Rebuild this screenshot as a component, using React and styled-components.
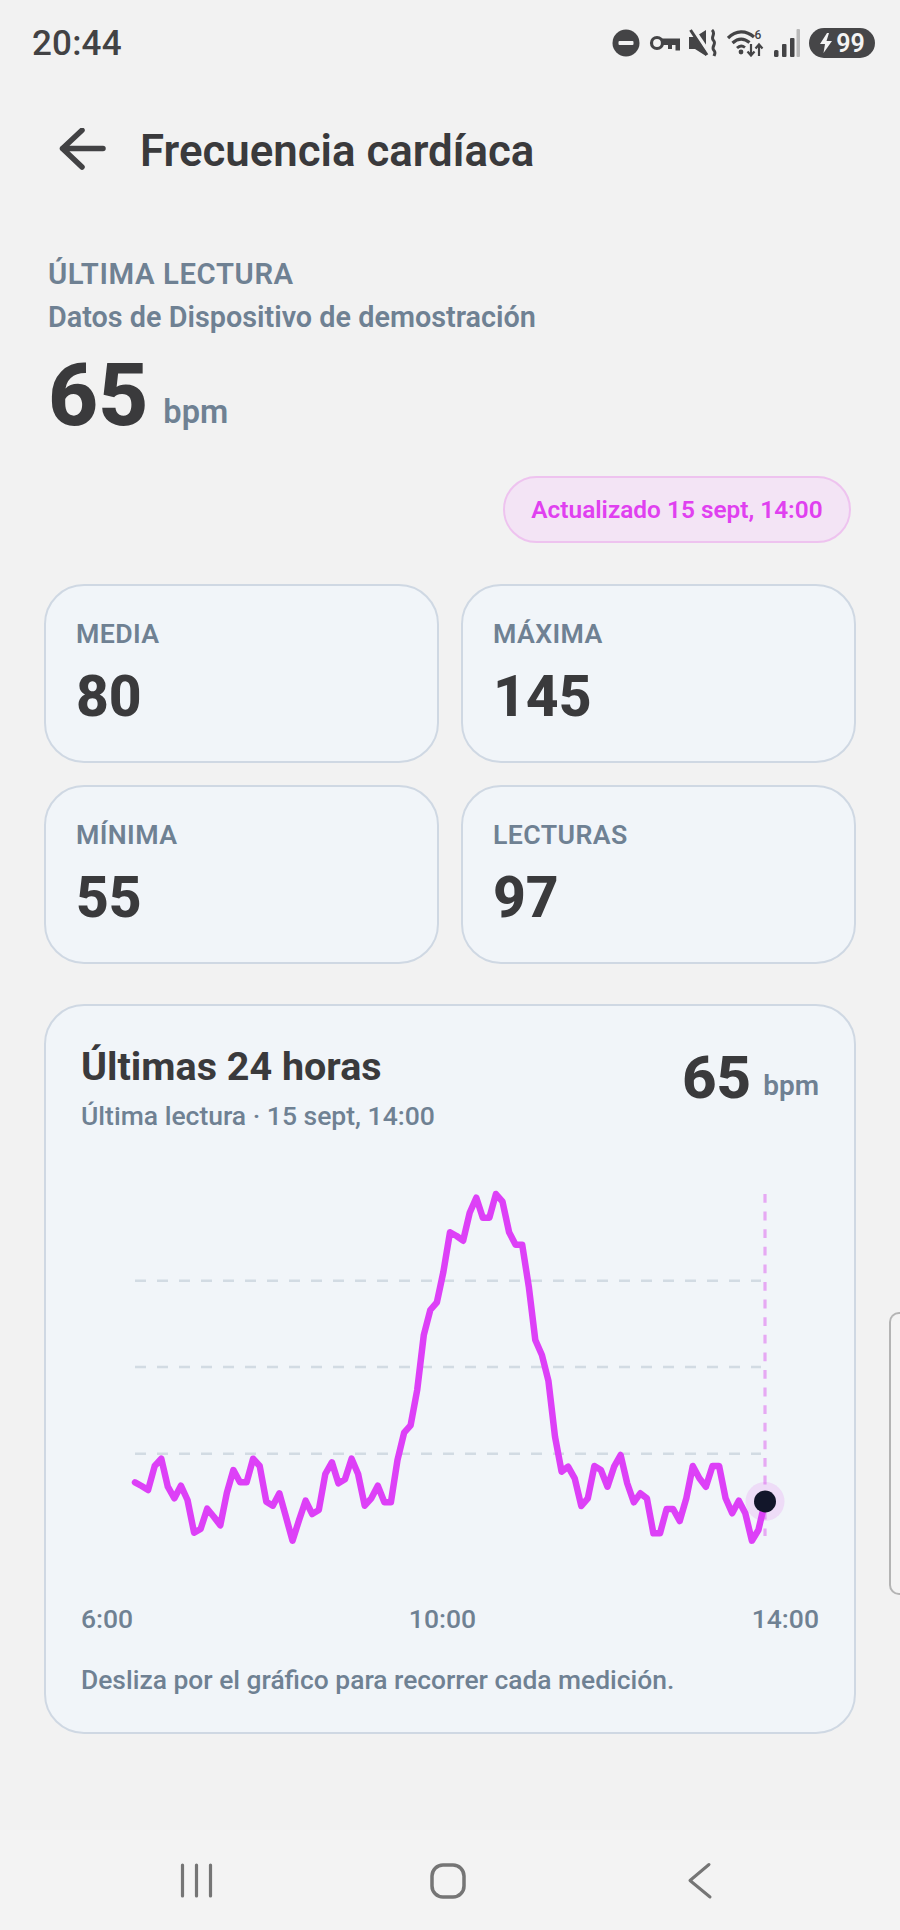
import React from 'react';
import styled, { createGlobalStyle } from 'styled-components';

const GlobalStyle = createGlobalStyle`
    html, body {
        margin: 0;
        padding: 0;
        background-color: #f2f2f2;
        font-family: Roboto, "Liberation Sans", sans-serif;
    }
`;

const Screen = styled.div`
    position: relative;
    width: 900px;
    height: 1930px;
    overflow: hidden;
    background-color: #f2f2f2;
    color: #3a3a3c;
`;

const StatusBar = styled.div`
    height: 86px;
    padding: 0 25px 0 32px;
    display: flex;
    align-items: center;
    justify-content: space-between;
`;

const Clock = styled.span`
    font-size: 35px;
    font-weight: 500;
    letter-spacing: 0.2px;
    color: #424244;
`;

const StatusIcons = styled.div`
    display: flex;
    align-items: center;
    gap: 8.6px;
`;

const BatteryPill = styled.div`
    width: 66px;
    height: 30px;
    border-radius: 15px;
    background-color: #464648;
    color: #f4f4f4;
    display: flex;
    align-items: center;
    justify-content: center;
    gap: 3px;
    font-size: 25px;
    font-weight: 600;
`;

const Header = styled.header`
    height: 129px;
    padding-left: 58px;
    display: flex;
    align-items: center;
    gap: 33px;
`;

const Title = styled.h1`
    margin: 0;
    font-size: 43.8px;
    font-weight: 600;
    color: #3a3a3c;
`;

const Summary = styled.section`
    padding: 43px 45px 0 48px;
`;

const Overline = styled.div`
    font-size: 29.3px;
    line-height: 32px;
    font-weight: 600;
    letter-spacing: 0.6px;
    color: #6f8193;
`;

const Source = styled.div`
    margin-top: 11px;
    font-size: 28.8px;
    line-height: 32px;
    font-weight: 600;
    color: #6f8193;
`;

const ReadingRow = styled.div`
    margin-top: 12px;
    display: flex;
    align-items: flex-end;
    gap: 15px;
`;

const BigValue = styled.span`
    font-size: 87px;
    line-height: 100px;
    font-weight: 800;
    color: #3a3a3c;
`;

const Unit = styled.span`
    margin-bottom: 15px;
    font-size: 32.5px;
    line-height: 36px;
    font-weight: 600;
    color: #6f8193;
`;

const PillRow = styled.div`
    margin-top: 31px;
    display: flex;
    justify-content: flex-end;
    padding-right: 4px;
`;

const UpdatedPill = styled.div`
    height: 67px;
    width: 348px;
    box-sizing: border-box;
    border: 2px solid #eec3ef;
    border-radius: 34px;
    background-color: #f3e4f5;
    color: #e040f0;
    font-size: 24.4px;
    font-weight: 600;
    display: flex;
    align-items: center;
    justify-content: center;
`;

const StatsGrid = styled.div`
    margin: 41px 44px 0 44px;
    display: grid;
    grid-template-columns: 395px 395px;
    grid-auto-rows: 179px;
    gap: 22px;
`;

const Card = styled.div`
    box-sizing: border-box;
    border: 2px solid #cfd8e3;
    border-radius: 40px;
    background-color: #f1f5f9;
`;

const StatCard = styled(Card)`
    padding: 33px 30px 0;
`;

const StatLabel = styled.div`
    font-size: 26.7px;
    line-height: 30px;
    font-weight: 600;
    letter-spacing: 0.4px;
    color: #6f8193;
`;

const StatValue = styled.div`
    margin-top: 15px;
    font-size: 57px;
    line-height: 66px;
    font-weight: 800;
    color: #3a3a3c;
`;

const ChartCard = styled(Card)`
    margin: 40px 44px 0 44px;
    height: 730px;
    padding: 38px 35px 0 35px;
`;

const ChartHeader = styled.div`
    display: flex;
    justify-content: space-between;
    align-items: flex-start;
`;

const ChartTitle = styled.h2`
    margin: 0;
    font-size: 39.5px;
    line-height: 46px;
    font-weight: 700;
    color: #3a3a3c;
`;

const ChartSubtitle = styled.div`
    margin-top: 10px;
    font-size: 26.5px;
    line-height: 32px;
    font-weight: 550;
    color: #6f8193;
`;

const ChartReading = styled.div`
    margin-top: -1px;
    display: flex;
    align-items: flex-end;
    gap: 12px;
`;

const ChartValue = styled.span`
    font-size: 60px;
    line-height: 70px;
    font-weight: 800;
    color: #3a3a3c;
`;

const ChartUnit = styled.span`
    margin-bottom: 11px;
    font-size: 28px;
    line-height: 32px;
    font-weight: 600;
    color: #6f8193;
`;

const ChartSvg = styled.svg`
    display: block;
    margin-top: 48px;
`;

const AxisRow = styled.div`
    margin-top: 23px;
    display: flex;
    justify-content: space-between;
    font-size: 26.5px;
    line-height: 32px;
    font-weight: 550;
    color: #6f8193;
`;

const ChartHint = styled.div`
    margin-top: 29px;
    font-size: 26.4px;
    line-height: 32px;
    font-weight: 550;
    color: #6f8193;
`;

const NavBar = styled.nav`
    position: absolute;
    left: 0;
    right: 0;
    bottom: 0;
    height: 100px;
    background-color: #f3f3f3;
`;

const NavIcons = styled.svg`
    display: block;
`;

const EdgeHandle = styled.div`
    position: absolute;
    top: 1312px;
    right: 0;
    width: 11px;
    height: 283px;
    box-sizing: border-box;
    border: 2px solid #b4b4b4;
    border-right: none;
    border-radius: 10px 0 0 10px;
    background-color: #f4f4f4;
`;

// y position of every reading, in page pixels
const READINGS = [
    937, 948, 960, 888, 866, 950, 985, 947, 990, 1088, 1077, 1016, 1040, 1066, 968, 900,
    937, 937, 866, 888, 995, 1007, 970, 1040, 1112, 1050, 992, 1032, 1020, 912, 877, 940,
    928, 866, 912, 1007, 985, 947, 997, 997, 870, 788, 766, 660, 495, 420, 397, 305,
    187, 198, 212, 128, 83, 143, 143, 72, 95, 187, 224, 224, 350, 510, 555, 632,
    800, 905, 890, 925, 1008, 985, 888, 900, 950, 890, 855, 940, 997, 970, 985, 1090,
    1090, 1017, 1017, 1053, 985, 888, 925, 950, 888, 888, 985, 1030, 992, 1030, 1112, 1080, 995,
].map((v) => 1170 + v / 3);

const CHART_X = 81;
const CHART_Y = 1180;
const STEP = 630 / 96;
const linePoints = READINGS.map((y, i) => `${(54 + i * STEP).toFixed(1)},${(y - CHART_Y).toFixed(1)}`).join(' ');
const GRID = [1280.7, 1367, 1453.7];

const StatusGlyphs = () => (
    <StatusIcons>
        <svg width="28" height="28" viewBox="0 0 28 28">
            <circle cx="14" cy="14" r="13.5" fill="#444446" />
            <rect x="6.5" y="12" width="15" height="4" rx="1" fill="#f2f2f2" />
        </svg>
        <svg width="31" height="20" viewBox="0 0 31 20">
            <circle cx="8" cy="10" r="5.5" fill="none" stroke="#444446" strokeWidth="3.2" />
            <path d="M13 5.5H31V17.5H26.5V12H23V16H19V12H13Z" fill="#444446" />
        </svg>
        <svg width="30" height="28" viewBox="0 0 30 28" fill="none">
            <path d="M1 8H7L18 1V27L7 20H1Z" fill="#444446" />
            <path d="M5 0L22 25" stroke="#f2f2f2" strokeWidth="4" />
            <path d="M2.5 1L19 26" stroke="#444446" strokeWidth="3" />
            <path d="M24 1C28.5 5 22 8 25.5 11.5C29 15 22.5 18 26 21.5C28 23.5 26.5 25.5 26 27" stroke="#444446" strokeWidth="3" />
        </svg>
        <svg width="38" height="28" viewBox="0 0 38 28" fill="none" stroke="#444446">
            <path d="M1 9C9 1 19 1 27 8" strokeWidth="3.2" />
            <path d="M5.5 14C11 9 17 9 22.5 13.5" strokeWidth="3.2" />
            <path d="M10 19C12.5 16.5 15.5 16.5 18 18.5" strokeWidth="2.8" />
            <circle cx="14" cy="23" r="2.4" fill="#444446" stroke="none" />
            <path d="M24 15V26M20.5 22.5L24 26.5L27.5 22.5M32 27V16M28.5 19.5L32 15.5L35.5 19.5" strokeWidth="2.2" />
            <text x="31" y="10" fontSize="12" fontWeight="500" fill="#444446" stroke="none" textAnchor="middle" fontFamily="Roboto, sans-serif">6</text>
        </svg>
        <svg width="27" height="28" viewBox="0 0 27 28">
            <rect x="1" y="21" width="4.5" height="7" rx="1.5" fill="#444446" />
            <rect x="9" y="15" width="4.5" height="13" rx="1" fill="#444446" />
            <rect x="17" y="9" width="4.5" height="19" rx="1" fill="#444446" />
            <rect x="23.5" y="0" width="3.5" height="28" rx="1" fill="#b9b9b9" />
        </svg>
        <BatteryPill>
            <svg width="14" height="20" viewBox="0 0 14 20">
                <path d="M8 0L1 11H6L4.5 20L13 8H7.5L10 0Z" fill="#f4f4f4" />
            </svg>
            99
        </BatteryPill>
    </StatusIcons>
);

const StatItem = ({ label, value }) => (
    <StatCard>
        <StatLabel>{label}</StatLabel>
        <StatValue>{value}</StatValue>
    </StatCard>
);

const App = () => {
    return (
        <Screen>
            <GlobalStyle />
            <StatusBar>
                <Clock>20:44</Clock>
                <StatusGlyphs />
            </StatusBar>
            <Header>
                <svg width="49" height="46" viewBox="0 0 49 46" fill="none" stroke="#424244" strokeWidth="5.5" strokeLinecap="round" strokeLinejoin="round">
                    <path d="M45 20.5H4.5M24 2.2L4.5 20.5L24 39" />
                </svg>
                <Title>Frecuencia cardíaca</Title>
            </Header>
            <Summary>
                <Overline>ÚLTIMA LECTURA</Overline>
                <Source>Datos de Dispositivo de demostración</Source>
                <ReadingRow>
                    <BigValue>65</BigValue>
                    <Unit>bpm</Unit>
                </ReadingRow>
                <PillRow>
                    <UpdatedPill>Actualizado 15 sept, 14:00</UpdatedPill>
                </PillRow>
            </Summary>
            <StatsGrid>
                <StatItem label="MEDIA" value="80" />
                <StatItem label="MÁXIMA" value="145" />
                <StatItem label="MÍNIMA" value="55" />
                <StatItem label="LECTURAS" value="97" />
            </StatsGrid>
            <ChartCard>
                <ChartHeader>
                    <div>
                        <ChartTitle>Últimas 24 horas</ChartTitle>
                        <ChartSubtitle>Última lectura · 15 sept, 14:00</ChartSubtitle>
                    </div>
                    <ChartReading>
                        <ChartValue>65</ChartValue>
                        <ChartUnit>bpm</ChartUnit>
                    </ChartReading>
                </ChartHeader>
                <ChartSvg width="738" height="400" viewBox="0 0 738 400" fill="none">
                    {GRID.map((y) => (
                        <line key={y} x1="54" x2="680" y1={y - CHART_Y} y2={y - CHART_Y} stroke="#d2dbe3" strokeWidth="2.4" strokeDasharray="11 11" />
                    ))}
                    <line x1={765 - CHART_X} x2={765 - CHART_X} y1="14" y2="356" stroke="#e6a9f3" strokeWidth="3.2" strokeDasharray="8.8 8.8" />
                    <polyline points={linePoints} stroke="#dd40f7" strokeWidth="6.5" strokeLinejoin="round" strokeLinecap="round" />
                    <circle cx={765 - CHART_X} cy="321.5" r="19.5" fill="#d946ef" fillOpacity="0.14" />
                    <circle cx={765 - CHART_X} cy="321.5" r="11" fill="#12162a" />
                </ChartSvg>
                <AxisRow>
                    <span>6:00</span>
                    <span>10:00</span>
                    <span>14:00</span>
                </AxisRow>
                <ChartHint>Desliza por el gráfico para recorrer cada medición.</ChartHint>
            </ChartCard>
            <EdgeHandle />
            <NavBar>
                <NavIcons width="900" height="100" viewBox="0 0 900 100" fill="none" stroke="#757575" strokeLinecap="round" strokeLinejoin="round">
                    <path d="M182.5 35V66M196.5 35V66M210.5 35V66" strokeWidth="3.2" />
                    <rect x="432" y="35" width="32" height="32" rx="11" strokeWidth="3.5" />
                    <path d="M709 34.5L690 50.5L710 67" strokeWidth="3" />
                </NavIcons>
            </NavBar>
        </Screen>
    );
};

export default App;
